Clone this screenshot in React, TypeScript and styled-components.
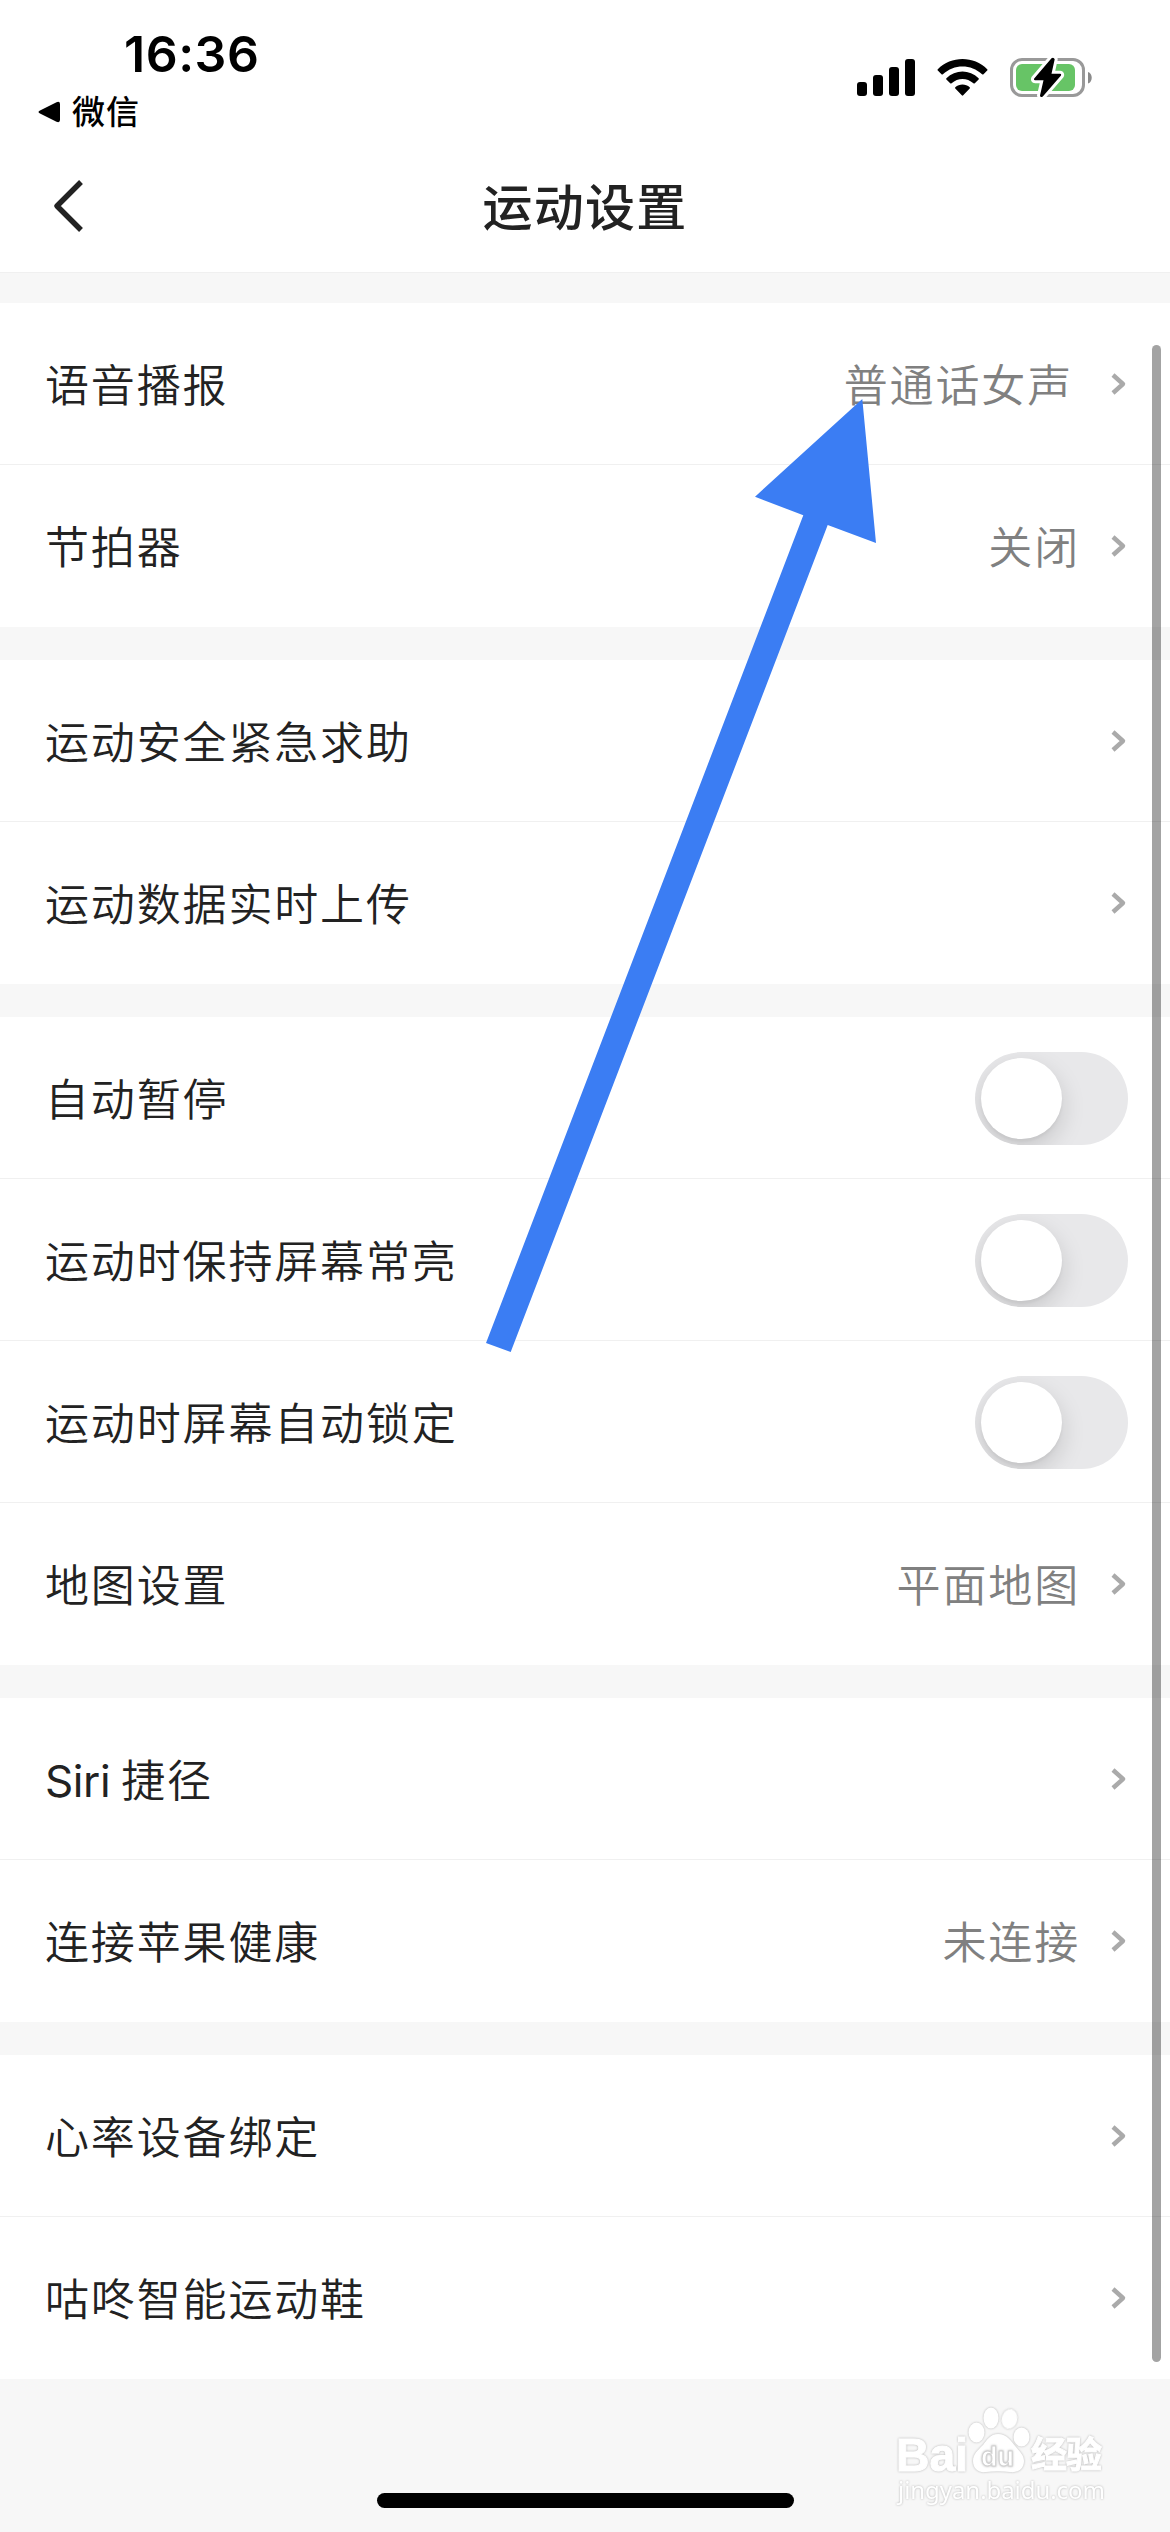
import React from 'react';
import styled, { createGlobalStyle } from 'styled-components';

const GlobalStyle = createGlobalStyle`
  * { box-sizing: border-box; }
  body { margin: 0; background: #f7f7f7; }
`;

const Screen = styled.div`
  position: relative;
  width: 1170px;
  height: 2532px;
  overflow: hidden;
  display: flex;
  flex-direction: column;
  background: #f7f7f7;
  color: #222;
  font-family: Inter, 'Noto Sans CJK SC', sans-serif;
`;

const Header = styled.header`
  height: 273px;
  flex: none;
  display: flex;
  flex-direction: column;
  background: #fff;
  border-bottom: 1px solid #f0f0f0;
`;

const StatusBar = styled.div`
  height: 140px;
  display: flex;
  justify-content: space-between;
  color: #000;
`;

const StatusLeft = styled.div`
  display: flex;
  flex-direction: column;
  padding: 24px 0 0 38px;
`;

const Clock = styled.div`
  padding-left: 86px;
  height: 60px;
  line-height: 60px;
  font-size: 50px;
  font-weight: 600;
  letter-spacing: 0.5px;
`;

const BackToApp = styled.div`
  display: flex;
  align-items: center;
  gap: 12px;
  height: 50px;
  margin-top: 3px;
  font-size: 33px;
  line-height: 50px;
  letter-spacing: 1px;
  font-weight: 500;
`;

const StatusIcons = styled.div`
  display: flex;
  align-items: flex-start;
  gap: 22px;
  padding: 57px 77px 0 0;
`;

const NavBar = styled.div`
  flex: 1;
  display: grid;
  grid-template-columns: 120px 1fr 120px;
  align-items: center;
`;

const BackButton = styled.button`
  border: 0;
  padding: 0 0 0 53px;
  background: none;
  display: flex;
`;

const Title = styled.h1`
  margin: 0;
  padding-top: 3px;
  text-align: center;
  font-size: 50px;
  line-height: 72px;
  font-weight: 500;
  letter-spacing: 1.2px;
`;

const List = styled.main`
  display: flex;
  flex-direction: column;
  gap: 33px;
  padding-top: 30px;
`;

const Group = styled.section`
  background: #fff;
`;

const Row = styled.div`
  height: 162px;
  display: flex;
  align-items: center;
  padding: 0 42px 0 45px;
  & + & { box-shadow: 0 -1px 0 #f0f0f0; }
`;

const Label = styled.span<{ $latin?: boolean }>`
  flex: 1;
  padding-top: 3px;
  font-size: 44px;
  line-height: 64px;
  font-weight: 350;
  letter-spacing: 1.85px;
`;

const Latin = styled.span`
  letter-spacing: -0.4px;
  word-spacing: -1px;
  font-weight: 400;
`;

const Value = styled.span<{ $gap: number }>`
  padding-top: 3px;
  font-size: 44px;
  line-height: 64px;
  letter-spacing: 1.85px;
  font-weight: 350;
  color: #808080;
  margin-right: ${(p) => p.$gap}px;
`;

const Chevron = styled.svg`
  width: 18px;
  height: 24px;
  flex: none;
  fill: none;
  stroke: #aaa;
  stroke-width: 4.4;
  stroke-linejoin: round;
`;

const Switch = styled.span`
  width: 153px;
  height: 93px;
  padding: 6px;
  border-radius: 47px;
  background: #e8e8ea;
  overflow: hidden;
`;

const Knob = styled.span`
  display: block;
  width: 81px;
  height: 81px;
  border-radius: 50%;
  background: #fff;
  box-shadow: 0 9px 24px rgba(0, 0, 0, 0.15), 0 3px 3px rgba(0, 0, 0, 0.04);
`;

const ScrollThumb = styled.div`
  position: absolute;
  left: 1152px;
  top: 345px;
  width: 9px;
  height: 2017px;
  border-radius: 5px;
  background: rgba(0, 0, 0, 0.36);
`;

const HomeIndicator = styled.div`
  position: absolute;
  left: 377px;
  bottom: 24px;
  width: 417px;
  height: 15px;
  border-radius: 8px;
  background: #000;
`;

const Annotation = styled.svg`
  position: absolute;
  left: 480px;
  top: 395px;
  width: 400px;
  height: 960px;
`;

const Watermark = styled.svg`
  position: absolute;
  left: 890px;
  top: 2400px;
  width: 230px;
  height: 112px;
  fill: #fff;
  & > * { filter: drop-shadow(0 0 1px #b4b4b4); }
`;

type Item = { label: string; latin?: string; value?: string; gap?: number; toggle?: boolean };

const groups: Item[][] = [
  [
    { label: '语音播报', value: '普通话女声', gap: 37 },
    { label: '节拍器', value: '关闭' },
  ],
  [{ label: '运动安全紧急求助' }, { label: '运动数据实时上传' }],
  [
    { label: '自动暂停', toggle: true },
    { label: '运动时保持屏幕常亮', toggle: true },
    { label: '运动时屏幕自动锁定', toggle: true },
    { label: '地图设置', value: '平面地图' },
  ],
  [{ latin: 'Siri ', label: '捷径' }, { label: '连接苹果健康', value: '未连接' }],
  [{ label: '心率设备绑定' }, { label: '咕咚智能运动鞋' }],
];

function SignalIcon() {
  return (
    <svg width="58" height="40" viewBox="0 0 58 40">
      <rect x="0" y="25" width="10" height="14" rx="3" />
      <rect x="16" y="18" width="10" height="21" rx="3" />
      <rect x="32" y="10" width="10" height="29" rx="3" />
      <rect x="48" y="2" width="10" height="37" rx="3" />
    </svg>
  );
}

function WifiIcon() {
  return (
    <svg width="51" height="40" viewBox="0 0 51 40">
      <path d="M.8 12.200C14-1.500 37-1.500 50.200 12.200q.6.700 0 1.400l-3.700 3.600q-.7.600-1.400 0C34 6.800 17 6.800 5.900 17.200q-.7.600-1.400 0L.8 13.600q-.6-.7 0-1.400Z" />
      <path d="M9.400 21.200c9-8.800 23.200-8.800 32.200 0q.6.700 0 1.400l-3.800 3.700q-.7.600-1.400 0c-6.400-5.800-15.400-5.800-21.800 0q-.7.600-1.400 0l-3.800-3.700q-.6-.7 0-1.400Z" />
      <path d="M18.300 30.200c4-3.600 10.400-3.600 14.400 0q.6.700 0 1.400l-6.500 6.700q-.7.700-1.400 0l-6.500-6.700q-.6-.7 0-1.400Z" />
    </svg>
  );
}

function BatteryIcon() {
  return (
    <svg width="83" height="44" viewBox="0 0 83 44">
      <rect x="1.500" y="2.500" width="72" height="36" rx="10.500" fill="none" stroke="#999" strokeWidth="3" />
      <path d="M78 15c5 1.500 5 10 0 11.500Z" fill="#8a8a8a" />
      <rect x="6" y="7" width="59" height="27" rx="6" fill="#67c466" />
      <path
        d="M41.500 1.200 24.200 21.400q-.8 1.800 1 1.800h8.300L30 38.500q.3 2.600 2.800 1L51 18.500q.6-1.600-1-1.700h-8.500l3.200-14.500q-.9-2.400-3.200-1.100Z"
        fill="#000"
        stroke="#fff"
        strokeWidth="6"
        strokeLinejoin="round"
        paintOrder="stroke"
      />
    </svg>
  );
}

export default function App() {
  return (
    <Screen>
      <GlobalStyle />
      <Header>
        <StatusBar>
          <StatusLeft>
            <Clock>16:36</Clock>
            <BackToApp>
              <svg width="22" height="22" viewBox="0 0 22 22">
                <path d="M2 9.500 18.500 1.200Q22 0 22 3v16q0 3-3.500 1.800L2 12.500q-3-1.500 0-3Z" />
              </svg>
              微信
            </BackToApp>
          </StatusLeft>
          <StatusIcons>
            <SignalIcon />
            <WifiIcon />
            <BatteryIcon />
          </StatusIcons>
        </StatusBar>
        <NavBar>
          <BackButton aria-label="返回">
            <svg width="32" height="54" viewBox="0 0 32 54" fill="none" stroke="#222" strokeWidth="5.400" strokeLinejoin="round">
              <path d="M28 3 4 27l24 24" />
            </svg>
          </BackButton>
          <Title>运动设置</Title>
        </NavBar>
      </Header>
      <List>
        {groups.map((items, i) => (
          <Group key={i}>
            {items.map((item) => (
              <Row key={item.label}>
                <Label>
                  {item.latin && <Latin>{item.latin}</Latin>}
                  {item.label}
                </Label>
                {item.value && <Value $gap={item.gap ?? 30}>{item.value}</Value>}
                {item.toggle ? (
                  <Switch role="switch" aria-checked="false">
                    <Knob />
                  </Switch>
                ) : (
                  <Chevron viewBox="0 0 18 24">
                    <path d="M3 3 13 12 3 21" />
                  </Chevron>
                )}
              </Row>
            ))}
          </Group>
        ))}
      </List>
      <ScrollThumb />
      <Annotation viewBox="480 395 400 960" fill="#3b7df3">
        <path d="M862.300 399 755 496.700l48.300 18.600L486 1343l24.700 9L827.700 525 876 543Z" />
      </Annotation>
      <Watermark viewBox="890 2400 230 112">
        <ellipse cx="976.500" cy="2432.500" rx="8" ry="10" />
        <ellipse cx="991" cy="2418" rx="7.500" ry="10.500" />
        <ellipse cx="1009.500" cy="2419" rx="7.800" ry="10" transform="rotate(12 1009.500 2419)" />
        <ellipse cx="1021.500" cy="2437" rx="8" ry="9.500" />
        <path d="M998 2434c-8 0-11 6-15 11-5 5-10 9-10 16 0 8 6 12 13 11 8-1 16-1 24 0 8 1 14-3 14-11 0-6-4-9-8-14-5-6-9-13-18-13Z" />
        <text x="896" y="2471" fontFamily="Liberation Sans" fontWeight="700" fontSize="47" textLength="72" lengthAdjust="spacingAndGlyphs" stroke="#fff">Bai</text>
        <text x="981" y="2466" fontFamily="Liberation Sans" fontWeight="700" fontSize="28" textLength="33" lengthAdjust="spacingAndGlyphs" stroke="#d2d2d2">du</text>
        <text x="1031" y="2468" fontFamily="Noto Sans CJK SC" fontWeight="700" fontSize="36" textLength="71" stroke="#fff">经验</text>
        <text x="898" y="2499" fontFamily="Noto Sans" fontSize="24" textLength="207">jingyan.baidu.com</text>
      </Watermark>
      <HomeIndicator />
    </Screen>
  );
}
